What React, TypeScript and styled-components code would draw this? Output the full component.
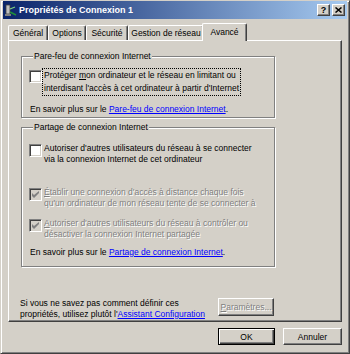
import styled, { createGlobalStyle } from "styled-components"

const Global = createGlobalStyle`
  html, body {
    margin: 0;
    padding: 0;
    background: #d4d0c8;
  }
  body {
    font-family: "Liberation Sans", Arial, sans-serif;
    font-size: 8.5px;
    color: #000;
  }
`

const Window = styled.div`
  width: 350px;
  height: 354px;
  box-sizing: border-box;
  background: #d4d0c8;
  border: 1px solid;
  border-color: #d4d0c8 #404040 #404040 #d4d0c8;
  box-shadow: inset 1px 1px 0 #fff, inset -1px -1px 0 #808080;
  padding: 0 2px 2px 2px;
  display: flex;
  flex-direction: column;
`

const TitleBar = styled.div`
  height: 18px;
  display: flex;
  align-items: center;
  padding: 0 2px 0 1px;
  background: linear-gradient(to right, #0a246a, #a6caf0);
`

const TitleIcon = styled.svg`
  width: 14px;
  height: 14px;
  margin-right: 1px;
  flex: none;
`

const TitleText = styled.div`
  flex: 1;
  color: #fff;
  font-weight: bold;
  font-size: 9px;
  white-space: nowrap;
`

const CaptionButtons = styled.div`
  display: flex;
  gap: 2px;
`

const CaptionButton = styled.div`
  width: 13px;
  height: 12px;
  box-sizing: border-box;
  background: #d4d0c8;
  border: 1px solid;
  border-color: #fff #404040 #404040 #fff;
  box-shadow: inset -1px -1px 0 #808080;
  display: flex;
  align-items: center;
  justify-content: center;
  font-weight: bold;
  font-size: 9px;
  line-height: 10px;
`

const Body = styled.div`
  flex: 1;
  display: flex;
  flex-direction: column;
  padding: 4px 5px 0 5px;
`

const TabRow = styled.div`
  display: flex;
  align-items: flex-end;
  height: 17px;
  position: relative;
  z-index: 1;
`

const Tab = styled.div<{ $w: number; $active?: boolean }>`
  width: ${(p) => p.$w}px;
  height: ${(p) => (p.$active ? 18 : 15)}px;
  margin: ${(p) => (p.$active ? "0 -2px -1px -2px" : "0")};
  box-sizing: border-box;
  background: #d4d0c8;
  border-top: 1px solid #fff;
  border-left: 1px solid #fff;
  border-right: 1px solid #404040;
  border-radius: 2px 2px 0 0;
  box-shadow: inset -1px 0 0 #808080;
  display: flex;
  align-items: ${(p) => (p.$active ? "flex-start" : "center")};
  padding-top: ${(p) => (p.$active ? "3px" : "0")};
  justify-content: center;
  white-space: nowrap;
`

const Panel = styled.div`
  height: 282px;
  box-sizing: border-box;
  border: 1px solid;
  border-color: #fff #404040 #404040 #fff;
  box-shadow: inset -1px -1px 0 #808080;
  padding: 10px 11px 1px 11px;
  display: flex;
  flex-direction: column;
`

const Group = styled.fieldset<{ $gap?: number; $bottom: number }>`
  width: 254px;
  box-sizing: border-box;
  margin: ${(p) => p.$gap ?? 0}px 0 0 1px;
  padding: 0 0 ${(p) => p.$bottom}px 7px;
  border: 1px solid #808080;
  box-shadow: 1px 1px 0 #fff, inset 1px 1px 0 #fff;
  min-width: 0;
`

const Legend = styled.legend`
  margin-left: 4px;
  padding: 0 1px;
  line-height: 11px;
  background: #d4d0c8;
`

const CheckRow = styled.div<{ $top: number }>`
  display: flex;
  align-items: flex-start;
  margin-top: ${(p) => p.$top}px;
`

const Box = styled.div<{ $disabled?: boolean }>`
  width: 13px;
  height: 13px;
  flex: none;
  box-sizing: border-box;
  margin-top: 1px;
  border: 1px solid;
  border-color: #808080 #fff #fff #808080;
  box-shadow: inset 1px 1px 0 #404040, inset -1px -1px 0 #d4d0c8;
  background: ${(p) => (p.$disabled ? "#d4d0c8" : "#fff")};
  display: flex;
  align-items: center;
  justify-content: center;
`

const Label = styled.div<{ $disabled?: boolean; $focus?: boolean; $lh?: number }>`
  margin-left: 1px;
  padding: 0 1px;
  line-height: ${(p) => p.$lh ?? 11}px;
  color: ${(p) => (p.$disabled ? "#808080" : "#000")};
  text-shadow: ${(p) => (p.$disabled ? "1px 1px 0 #fff" : "none")};
  outline: ${(p) => (p.$focus ? "1px dotted #000" : "none")};
  white-space: nowrap;
`

const Info = styled.div<{ $top: number }>`
  margin-top: ${(p) => p.$top}px;
  margin-left: 1px;
  line-height: 11px;
  white-space: nowrap;
`

const Link = styled.span`
  color: #0000ff;
  text-decoration: underline;
`

const Footer = styled.div`
  margin-top: auto;
  display: flex;
  align-items: flex-start;
`

const FooterText = styled.div`
  width: 198px;
  line-height: 11px;
  white-space: nowrap;
`

const Button = styled.div<{ $w: number; $h?: number; $default?: boolean; $disabled?: boolean }>`
  width: ${(p) => p.$w}px;
  height: ${(p) => p.$h ?? 17}px;
  box-sizing: border-box;
  border: 1px solid;
  border-color: ${(p) => (p.$default ? "#000" : "#fff #404040 #404040 #fff")};
  box-shadow: ${(p) =>
    p.$default
      ? "inset 1px 1px 0 #fff, inset -1px -1px 0 #404040, inset -2px -2px 0 #808080"
      : "inset -1px -1px 0 #808080"};
  background: #d4d0c8;
  display: flex;
  align-items: center;
  justify-content: center;
  color: ${(p) => (p.$disabled ? "#808080" : "#000")};
  text-shadow: ${(p) => (p.$disabled ? "1px 1px 0 #fff" : "none")};
`

const ButtonRow = styled.div`
  display: flex;
  justify-content: flex-end;
  gap: 8px;
  margin-top: 6px;
`

const U = styled.span`
  text-decoration: underline;
`

const Check = ({ color }: { color: string }) => (
  <svg width="7" height="7" viewBox="0 0 7 7">
    <path d="M0 2v3l2 2 5-5V0L2 4z" fill={color} />
  </svg>
)

const CheckItem = ({
  top,
  checked,
  disabled,
  focus,
  lh,
  children,
}: {
  top: number
  checked?: boolean
  disabled?: boolean
  focus?: boolean
  lh?: number
  children: React.ReactNode
}) => (
  <CheckRow $top={top}>
    <Box $disabled={disabled}>{checked && <Check color={disabled ? "#808080" : "#000"} />}</Box>
    <Label $disabled={disabled} $focus={focus} $lh={lh}>
      {children}
    </Label>
  </CheckRow>
)

export default function App() {
  return (
    <>
      <Global />
      <Window>
        <TitleBar>
          <TitleIcon viewBox="0 0 14 14">
            <rect x="2" y="2" width="4" height="9" fill="#c0c0c0" stroke="#404040" strokeWidth="0.8" />
            <path d="M6 9 L12 12" stroke="#1f8f3a" strokeWidth="1.6" />
            <path d="M6 6 L11 4" stroke="#7fd07f" strokeWidth="1.2" />
            <rect x="1" y="11" width="6" height="2" fill="#808080" />
          </TitleIcon>
          <TitleText>Propriétés de Connexion 1</TitleText>
          <CaptionButtons>
            <CaptionButton>?</CaptionButton>
            <CaptionButton>
              <svg width="7" height="6" viewBox="0 0 7 6">
                <path d="M0.5 0.5 L6.5 5.5 M6.5 0.5 L0.5 5.5" stroke="#000" strokeWidth="1.5" />
              </svg>
            </CaptionButton>
          </CaptionButtons>
        </TitleBar>
        <Body>
          <TabRow>
            <Tab $w={40}>Général</Tab>
            <Tab $w={38}>Options</Tab>
            <Tab $w={42}>Sécurité</Tab>
            <Tab $w={76}>Gestion de réseau</Tab>
            <Tab $w={45} $active>
              Avancé
            </Tab>
          </TabRow>
          <Panel>
            <Group $bottom={2}>
              <Legend>Pare-feu de connexion Internet</Legend>
              <CheckItem top={7} focus lh={13}>
                Protéger <U>m</U>on ordinateur et le réseau en limitant ou
                <br />
                interdisant l'accès à cet ordinateur à partir d'Internet
              </CheckItem>
              <Info $top={9}>
                En savoir plus sur le <Link>Pare-feu de connexion Internet</Link>.
              </Info>
            </Group>
            <Group $gap={4} $bottom={8}>
              <Legend>Partage de connexion Internet</Legend>
              <CheckItem top={10}>
                Autoriser d'autres utilisateurs du réseau à se connecter
                <br />
                via la connexion Internet de cet ordinateur
              </CheckItem>
              <CheckItem top={22} checked disabled>
                <U>É</U>tablir une connexion d'accès à distance chaque fois
                <br />
                qu'un ordinateur de mon réseau tente de se connecter à
              </CheckItem>
              <CheckItem top={9} checked disabled>
                <U>A</U>utoriser d'autres utilisateurs du réseau à contrôler ou
                <br />
                désactiver la connexion Internet partagée
              </CheckItem>
              <Info $top={7}>
                En savoir plus sur le <Link>Partage de connexion Internet</Link>.
              </Info>
            </Group>
            <Footer>
              <FooterText>
                Si vous ne savez pas comment définir ces
                <br />
                propriétés, utilisez plutôt l'<Link>Assistant Configuration</Link>
              </FooterText>
              <Button $w={56} $h={18} $disabled>
                <span>
                  <U>P</U>aramètres...
                </span>
              </Button>
            </Footer>
          </Panel>
          <ButtonRow>
            <Button $w={57} $default>
              OK
            </Button>
            <Button $w={59}>Annuler</Button>
          </ButtonRow>
        </Body>
      </Window>
    </>
  )
}
